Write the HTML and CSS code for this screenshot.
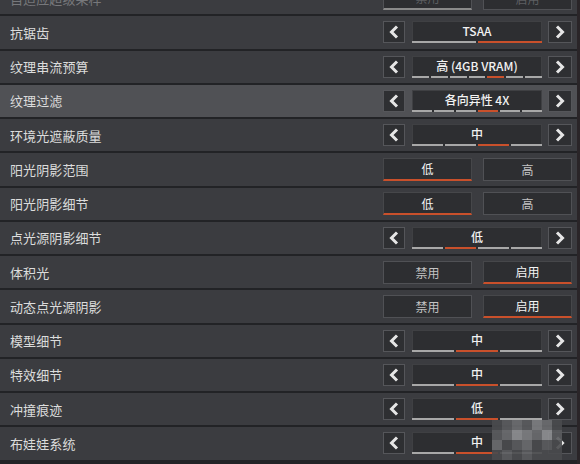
FILE: index.html
```html
<!DOCTYPE html>
<html lang="zh">
<head>
<meta charset="utf-8">
<link rel="stylesheet" href="styles.css">
</head>
<body>
<div class="panel">
  <div class="row partial">
    <span class="label">自适应超级采样</span>
    <div class="toggle"><div class="opt dim-under">禁用</div><div class="opt">启用</div></div>
  </div>

  <div class="row">
    <span class="label">抗锯齿</span>
    <div class="stepper">
      <div class="arrow"><svg viewBox="0 0 10 14"><polyline points="8,1.5 2.5,7 8,12.5"/></svg></div>
      <div class="value"><span class="txt">TSAA</span><div class="segs"><i></i><i class="on"></i></div></div>
      <div class="arrow"><svg viewBox="0 0 10 14"><polyline points="2,1.5 7.5,7 2,12.5"/></svg></div>
    </div>
  </div>

  <div class="row">
    <span class="label">纹理串流预算</span>
    <div class="stepper">
      <div class="arrow"><svg viewBox="0 0 10 14"><polyline points="8,1.5 2.5,7 8,12.5"/></svg></div>
      <div class="value"><span class="txt">高 (4GB VRAM)</span><div class="segs"><i></i><i></i><i></i><i></i><i class="on"></i><i></i><i></i></div></div>
      <div class="arrow"><svg viewBox="0 0 10 14"><polyline points="2,1.5 7.5,7 2,12.5"/></svg></div>
    </div>
  </div>

  <div class="row hl">
    <span class="label">纹理过滤</span>
    <div class="stepper">
      <div class="arrow"><svg viewBox="0 0 10 14"><polyline points="8,1.5 2.5,7 8,12.5"/></svg></div>
      <div class="value"><span class="txt">各向异性 4X</span><div class="segs"><i></i><i></i><i></i><i class="on"></i><i></i><i></i></div></div>
      <div class="arrow"><svg viewBox="0 0 10 14"><polyline points="2,1.5 7.5,7 2,12.5"/></svg></div>
    </div>
  </div>

  <div class="row">
    <span class="label">环境光遮蔽质量</span>
    <div class="stepper">
      <div class="arrow"><svg viewBox="0 0 10 14"><polyline points="8,1.5 2.5,7 8,12.5"/></svg></div>
      <div class="value"><span class="txt">中</span><div class="segs"><i></i><i></i><i class="on"></i><i></i></div></div>
      <div class="arrow"><svg viewBox="0 0 10 14"><polyline points="2,1.5 7.5,7 2,12.5"/></svg></div>
    </div>
  </div>

  <div class="row">
    <span class="label">阳光阴影范围</span>
    <div class="toggle"><div class="opt on">低</div><div class="opt">高</div></div>
  </div>

  <div class="row">
    <span class="label">阳光阴影细节</span>
    <div class="toggle"><div class="opt on">低</div><div class="opt">高</div></div>
  </div>

  <div class="row">
    <span class="label">点光源阴影细节</span>
    <div class="stepper">
      <div class="arrow"><svg viewBox="0 0 10 14"><polyline points="8,1.5 2.5,7 8,12.5"/></svg></div>
      <div class="value"><span class="txt">低</span><div class="segs"><i></i><i class="on"></i><i></i><i></i></div></div>
      <div class="arrow"><svg viewBox="0 0 10 14"><polyline points="2,1.5 7.5,7 2,12.5"/></svg></div>
    </div>
  </div>

  <div class="row">
    <span class="label">体积光</span>
    <div class="toggle"><div class="opt">禁用</div><div class="opt on">启用</div></div>
  </div>

  <div class="row">
    <span class="label">动态点光源阴影</span>
    <div class="toggle"><div class="opt">禁用</div><div class="opt on">启用</div></div>
  </div>

  <div class="row">
    <span class="label">模型细节</span>
    <div class="stepper">
      <div class="arrow"><svg viewBox="0 0 10 14"><polyline points="8,1.5 2.5,7 8,12.5"/></svg></div>
      <div class="value"><span class="txt">中</span><div class="segs"><i></i><i class="on"></i><i></i></div></div>
      <div class="arrow"><svg viewBox="0 0 10 14"><polyline points="2,1.5 7.5,7 2,12.5"/></svg></div>
    </div>
  </div>

  <div class="row">
    <span class="label">特效细节</span>
    <div class="stepper">
      <div class="arrow"><svg viewBox="0 0 10 14"><polyline points="8,1.5 2.5,7 8,12.5"/></svg></div>
      <div class="value"><span class="txt">中</span><div class="segs"><i></i><i class="on"></i><i></i></div></div>
      <div class="arrow"><svg viewBox="0 0 10 14"><polyline points="2,1.5 7.5,7 2,12.5"/></svg></div>
    </div>
  </div>

  <div class="row">
    <span class="label">冲撞痕迹</span>
    <div class="stepper">
      <div class="arrow"><svg viewBox="0 0 10 14"><polyline points="8,1.5 2.5,7 8,12.5"/></svg></div>
      <div class="value"><span class="txt">低</span><div class="segs"><i></i><i class="on"></i><i></i></div></div>
      <div class="arrow"><svg viewBox="0 0 10 14"><polyline points="2,1.5 7.5,7 2,12.5"/></svg></div>
    </div>
  </div>

  <div class="row">
    <span class="label">布娃娃系统</span>
    <div class="stepper">
      <div class="arrow"><svg viewBox="0 0 10 14"><polyline points="8,1.5 2.5,7 8,12.5"/></svg></div>
      <div class="value"><span class="txt">中</span><div class="segs"><i></i><i class="on"></i><i></i></div></div>
      <div class="arrow"><svg viewBox="0 0 10 14"><polyline points="2,1.5 7.5,7 2,12.5"/></svg></div>
    </div>
  </div>

  <div class="mosaic">
    <b class="m1"></b><b class="m2"></b><b class="m3"></b><b class="m2"></b><b class="m4"></b><b class="m3"></b><b class="m1"></b>
    <b class="m2"></b><b class="m3"></b><b class="m5"></b><b class="m4"></b><b class="m3"></b><b class="m5"></b><b class="m2"></b>
    <b class="m3"></b><b class="m1"></b><b class="m2"></b><b class="m3"></b><b class="m1"></b><b class="m2"></b><b class="m1"></b>
    <b class="m1"></b><b class="m2"></b><b class="m1"></b><b class="m2"></b><b class="m1"></b><b class="m1"></b><b class="m1"></b>
  </div>
</div>
</body>
</html>
```

FILE: styles.css
```css
html, body {
  margin: 0;
  padding: 0;
  background: #1e1f22;
  overflow: hidden;
}
body {
  width: 580px;
  height: 464px;
  font-family: "Noto Sans CJK SC", "Noto Sans", sans-serif;
}
.panel {
  position: relative;
  width: 577px;
  height: 464px;
  display: flex;
  flex-direction: column;
  gap: 2px;
  background: #222326;
  border-right: 3px solid #2a2528;
  overflow: hidden;
}
.row {
  flex: 0 0 32.25px;
  height: 32.25px;
  display: flex;
  align-items: center;
  justify-content: space-between;
  padding: 0 5px 0 10px;
  background: #3b3c40;
}
.row.partial {
  margin-top: -18px;
}
.row.hl {
  background: #505155;
}
.label {
  font-size: 13px;
  color: #dcdcdc;
  letter-spacing: 0.1px;
}
.partial .label {
  color: #77787b;
}
.stepper {
  display: flex;
  align-items: stretch;
  height: 22px;
  width: 189px;
}
.arrow {
  width: 22px;
  flex: 0 0 22px;
  box-sizing: border-box;
  border: 1px solid #55565a;
  background: #2e2f32;
  display: flex;
  align-items: center;
  justify-content: center;
}
.arrow:first-child { margin-right: 7px; }
.arrow:last-child { margin-left: 6px; width: 24px; flex-basis: 24px; }
.arrow svg {
  width: 10px;
  height: 14px;
}
.arrow polyline {
  fill: none;
  stroke: #e6e6e6;
  stroke-width: 3;
  stroke-linecap: butt;
  stroke-linejoin: miter;
}
.value {
  flex: 1;
  display: flex;
  flex-direction: column;
  background: #2d2e31;
  box-sizing: border-box;
  border: 1px solid #3f4043;
  border-bottom: none;
}
.txt {
  flex: 1;
  display: flex;
  align-items: center;
  justify-content: center;
  font-size: 12px;
  font-weight: 500;
  color: #f2f2f2;
  line-height: 1;
  padding-bottom: 1px;
}
.segs {
  display: flex;
  gap: 2px;
  height: 2px;
  margin: 0 -1px;
}
.segs i {
  flex: 1;
  background: #a8a8a8;
}
.segs i.on {
  background: #c9502b;
}
.toggle {
  display: flex;
  gap: 11px;
  width: 189px;
  height: 23px;
}
.opt {
  flex: 1;
  box-sizing: border-box;
  border: 1px solid #505155;
  background: #2d2e31;
  display: flex;
  align-items: center;
  justify-content: center;
  font-size: 12px;
  color: #c4c4c4;
}
.opt.on {
  color: #f4f4f4;
  border-color: #46474a;
  border-bottom: 2px solid #c9502b;
}
.opt.dim-under {
  border-bottom: 2px solid #8a8a8a;
}
.partial .opt { color: #5e5f62; }
.mosaic {
  position: absolute;
  left: 492px;
  top: 420px;
  display: grid;
  grid-template-columns: repeat(7, 10px);
  grid-auto-rows: 10px;
  opacity: 0.9;
}
.mosaic b { display: block; }
.m1 { background: #4a4b4e; }
.m2 { background: #5b5c5f; }
.m3 { background: #6c6d70; }
.m4 { background: #7e7f82; }
.m5 { background: #8f9093; }
```
